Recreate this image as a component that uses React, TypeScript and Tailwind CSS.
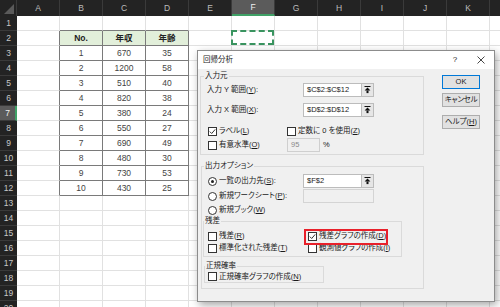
import type { ReactNode } from 'react';

const COLS = ['A', 'B', 'C', 'D', 'E', 'F', 'G', 'H', 'I', 'J', 'K', 'L'];
const ROWS = Array.from({ length: 20 }, (_, i) => i + 1);

const TABLE: Record<number, string[]> = {
  2: ['No.', '年収', '年齢'],
  3: ['1', '670', '35'],
  4: ['2', '1200', '58'],
  5: ['3', '510', '40'],
  6: ['4', '820', '38'],
  7: ['5', '380', '24'],
  8: ['6', '550', '27'],
  9: ['7', '690', '49'],
  10: ['8', '480', '30'],
  11: ['9', '730', '53'],
  12: ['10', '430', '25'],
};

function Cell({ row, col }: { row: number; col: number }) {
  const inTable = row >= 2 && row <= 12;
  const darkRight = inTable && col <= 3;
  const darkBottom = col >= 1 && col <= 3 && row <= 12;
  const isHead = row === 2 && col >= 1 && col <= 3;
  const value = col >= 1 && col <= 3 ? TABLE[row]?.[col - 1] : undefined;

  return (
    <div
      className={`relative flex h-full w-[43px] shrink-0 items-center justify-center border-r border-b ${
        darkRight ? 'border-r-[#7a7a7a]' : 'border-r-[#e1e1e1]'
      } ${darkBottom ? 'border-b-[#7a7a7a]' : 'border-b-[#e1e1e1]'} ${
        isHead ? 'bg-[#e2efda] font-bold text-[#222]' : 'bg-white text-[#444]'
      }`}
    >
      {value}
      {row === 2 && col === 5 && (
        <div className="absolute -left-px -top-px right-0 bottom-0 border-2 border-dashed border-[#3a9460]" />
      )}
    </div>
  );
}

function Sheet() {
  return (
    <div className="flex flex-col text-[8.5px]">
      <div className="flex h-[16px] shrink-0 bg-[#232323]">
        <div className="flex w-[17px] shrink-0 items-end justify-end border-r border-[#3a3a3a] pr-[2px] pb-[2px]">
          <svg width="10" height="10" viewBox="0 0 10 10">
            <polygon points="10,0 10,10 0,10" fill="#5a5a5a" />
          </svg>
        </div>
        {COLS.map((c) =>
          c === 'F' ? (
            <div
              key={c}
              className="flex w-[43px] shrink-0 items-center justify-center border-r border-b-2 border-r-[#3a3a3a] border-b-[#3fa066] bg-[#5b5b5b] text-[#f0f0f0]"
            >
              {c}
            </div>
          ) : (
            <div
              key={c}
              className="flex w-[43px] shrink-0 items-center justify-center border-r border-[#3a3a3a] text-[#bdbdbd]"
            >
              {c}
            </div>
          )
        )}
      </div>
      {ROWS.map((r) => (
        <div key={r} className="flex h-[15px] shrink-0">
          {r === 7 ? (
            <div className="flex w-[17px] shrink-0 items-center justify-center border-b border-r-2 border-b-[#3a3a3a] border-r-[#3fa066] bg-[#5b5b5b] text-[#f0f0f0]">
              {r}
            </div>
          ) : (
            <div className="flex w-[17px] shrink-0 items-center justify-center border-b border-[#3a3a3a] bg-[#232323] text-[#c8c8c8]">
              {r}
            </div>
          )}
          {COLS.map((c, i) => (
            <Cell key={c} row={r} col={i} />
          ))}
        </div>
      ))}
    </div>
  );
}

function Check({ checked }: { checked?: boolean }) {
  return (
    <span className="flex h-[9px] w-[9px] shrink-0 items-center justify-center border border-[#333] bg-white">
      {checked && (
        <svg width="7" height="7" viewBox="0 0 7 7">
          <polyline points="0.8,3.6 2.7,5.5 6.2,1.4" fill="none" stroke="#333" strokeWidth="1" />
        </svg>
      )}
    </span>
  );
}

function Radio({ selected }: { selected?: boolean }) {
  return (
    <span className="flex h-[9px] w-[9px] shrink-0 items-center justify-center rounded-full border border-[#333] bg-white">
      {selected && <span className="h-[3px] w-[3px] rounded-full bg-[#222]" />}
    </span>
  );
}

function Option({ children, checked, radio, selected }: { children: ReactNode; checked?: boolean; radio?: boolean; selected?: boolean }) {
  return (
    <span className="flex items-center gap-[2px] whitespace-nowrap">
      {radio ? <Radio selected={selected} /> : <Check checked={checked} />}
      <span>{children}</span>
    </span>
  );
}

function RangeInput({ value, width = 'w-[59px]' }: { value: string; width?: string }) {
  return (
    <div className="flex h-[14px]">
      <div className={`flex ${width} items-center border border-[#bcbcbc] bg-white pl-[3px] text-[#222]`}>{value}</div>
      <div className="flex w-[12px] items-center justify-center border border-l-0 border-[#bcbcbc] bg-[#e6e6e6]">
        <svg width="7" height="8" viewBox="0 0 7 8">
          <rect x="0.5" y="0" width="6" height="1" fill="#111" />
          <polygon points="3.5,1.6 0.6,4.6 6.4,4.6" fill="#111" />
          <rect x="2.5" y="4.5" width="2" height="2.6" fill="#111" />
        </svg>
      </div>
    </div>
  );
}

function U({ children }: { children: ReactNode }) {
  return <span className="underline underline-offset-1">{children}</span>;
}

function Dialog() {
  return (
    <div className="absolute left-[197px] top-[50px] flex h-[252px] w-[298px] flex-col border border-[#8c8c8c] bg-[#f0f0f0] text-[7.5px] leading-[10px] text-[#1a1a1a] shadow-[2px_3px_8px_rgba(0,0,0,0.35)] [font-feature-settings:'palt']">
      <div className="flex h-[18px] shrink-0 items-center bg-white pl-[5px] pr-[8px]">
        <span>回帰分析</span>
        <span className="ml-auto w-[10px] text-center text-[8px]">?</span>
        <span className="ml-[16px] flex w-[10px] items-center justify-center">
          <svg width="8" height="8" viewBox="0 0 8 8">
            <path d="M0.5 0.5 L7.5 7.5 M7.5 0.5 L0.5 7.5" stroke="#333" strokeWidth="0.9" />
          </svg>
        </span>
      </div>

      <div className="flex pl-[2px]">
        <div className="flex w-[224px] flex-col">
          <fieldset className="mt-[2px] border border-[#dadada] px-[6px] pb-[2px]">
            <legend className="-ml-[3px] px-[1px]">入力元</legend>
            <div className="mt-[2px] flex h-[14px] items-center">
              <span className="w-[96px]">
                入力 Y 範囲(<U>Y</U>):
              </span>
              <RangeInput value="$C$2:$C$12" />
            </div>
            <div className="mt-[6px] flex h-[14px] items-center">
              <span className="w-[96px]">
                入力 X 範囲(<U>X</U>):
              </span>
              <RangeInput value="$D$2:$D$12" />
            </div>
            <div className="mt-[8px] flex h-[12px] items-center pl-[1px]">
              <span className="w-[79px]">
                <Option checked>
                  ラベル(<U>L</U>)
                </Option>
              </span>
              <Option>
                定数に 0 を使用(<U>Z</U>)
              </Option>
            </div>
            <div className="mt-[1px] flex h-[14px] items-center pl-[1px]">
              <span className="w-[79px]">
                <Option>
                  有意水準(<U>O</U>)
                </Option>
              </span>
              <div className="flex h-[14px] w-[33px] items-center border border-[#cfcfcf] bg-[#f0f0f0] pl-[3px] text-[#8a8a8a]">95</div>
              <span className="ml-[3px]">%</span>
            </div>
          </fieldset>

          <fieldset className="mt-[6px] ml-px border border-[#dadada] px-0 pb-[5px]">
            <legend className="ml-[2px] px-[1px]">出力オプション</legend>
            <div className="mt-[3px] flex h-[14px] items-center pl-[6px]">
              <span className="w-[95px]">
                <Option radio selected>
                  一覧の出力先(<U>S</U>):
                </Option>
              </span>
              <RangeInput value="$F$2" />
            </div>
            <div className="mt-[1px] flex h-[14px] items-center pl-[6px]">
              <span className="w-[95px]">
                <Option radio>
                  新規ワークシート(<U>P</U>):
                </Option>
              </span>
              <div className="h-[14px] w-[71px] border border-[#d4d4d4] bg-[#f0f0f0]" />
            </div>
            <div className="mt-[1px] flex h-[12px] items-center pl-[6px]">
              <Option radio>
                新規ブック(<U>W</U>)
              </Option>
            </div>

            <fieldset className="ml-px w-[199px] border border-[#dadada] pb-[2px]">
              <legend className="ml-0 px-[1px]">残差</legend>
              <div className="mt-[4px] flex h-[12px] items-center pl-[4px]">
                <span className="w-[100px]">
                  <Option>
                    残差(<U>R</U>)
                  </Option>
                </span>
                <Option checked>
                  残差グラフの作成(<U>D</U>)
                </Option>
              </div>
              <div className="flex h-[12px] items-center pl-[4px]">
                <span className="w-[100px]">
                  <Option>
                    標準化された残差(<U>T</U>)
                  </Option>
                </span>
                <Option>
                  観測値グラフの作成(<U>I</U>)
                </Option>
              </div>
            </fieldset>

            <fieldset className="mt-[4px] ml-[2px] w-[120px] border border-[#dadada]">
              <legend className="ml-0 px-[1px]">正規確率</legend>
              <div className="flex h-[11px] items-center pl-[3px]">
                <Option>
                  正規確率グラフの作成(<U>N</U>)
                </Option>
              </div>
            </fieldset>
          </fieldset>
        </div>

        <div className="ml-[18px] mt-[6px] flex flex-col">
          <button type="button" className="flex h-[14px] w-[38px] items-center justify-center whitespace-nowrap border border-[#0078d7] bg-[#e1e1e1]">
            OK
          </button>
          <button type="button" className="mt-[4px] flex h-[14px] w-[38px] items-center justify-center whitespace-nowrap border border-[#adadad] bg-[#e1e1e1] tracking-[-0.3px]">
            キャンセル
          </button>
          <button type="button" className="mt-[8px] flex h-[14px] w-[38px] items-center justify-center whitespace-nowrap border border-[#adadad] bg-[#e1e1e1]">
            ヘルプ(<U>H</U>)
          </button>
        </div>
      </div>

      <div className="absolute left-[106px] top-[178px] h-[16px] w-[84px] border-2 border-[#e8202a]" />
    </div>
  );
}

export default function App() {
  return (
    <div className="relative h-[307px] w-[500px] overflow-hidden bg-white font-['Liberation_Sans','Noto_Sans_CJK_JP',sans-serif]">
      <Sheet />
      <Dialog />
    </div>
  );
}
